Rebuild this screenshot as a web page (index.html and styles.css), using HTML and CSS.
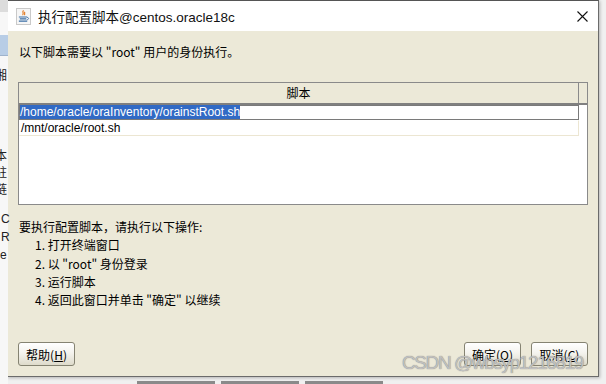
FILE: index.html
```html
<!DOCTYPE html>
<html lang="zh-CN">
<head>
    <meta charset="UTF-8">
    <title>执行配置脚本@centos.oracle18c</title>
    <link rel="stylesheet" href="styles.css">
</head>
<body>
    <div class="desk">
        <!-- janela de tras, so aparece nas bordas -->
        <div class="back-app">
            <div class="back-sel"></div>
            <div class="back-txt t1">湘</div>
            <div class="back-txt t2">本</div>
            <div class="back-txt t3">驻</div>
            <div class="back-txt t4">链</div>
            <div class="back-txt t5">C</div>
            <div class="back-txt t6">R</div>
            <div class="back-txt t7">e</div>
        </div>
        <div class="back-tabs">
            <span class="tab"></span>
            <span class="tab"></span>
            <span class="tab"></span>
        </div>

        <div class="window">
            <div class="titlebar">
                <span class="title-icon">
                    <svg width="14" height="15" viewBox="0 0 14 15">
                        <path d="M7 1 C5 3 8 4 6 6 M8.5 2.5 C7.5 4 9 4.5 8 6" stroke="#e0761c" stroke-width="1.2" fill="none"/>
                        <path d="M2 8 h9 M3 10 h7 M2 12.5 h9" stroke="#3a6ea5" stroke-width="1.2" fill="none"/>
                        <path d="M11 8.5 c2 0 2 2.5 -0.5 2.5" stroke="#3a6ea5" stroke-width="1" fill="none"/>
                    </svg>
                </span>
                <span class="title-text">执行配置脚本@centos.oracle18c</span>
                <span class="close-btn">
                    <svg width="11" height="11" viewBox="0 0 11 11">
                        <path d="M0.5 0.5 L10.5 10.5 M10.5 0.5 L0.5 10.5" stroke="#111" stroke-width="1.1"/>
                    </svg>
                </span>
            </div>

            <div class="content">
                <p class="intro">以下脚本需要以 "root" 用户的身份执行。</p>

                <div class="script-table">
                    <div class="table-head">
                        <div class="head-cell">脚本</div>
                        <div class="head-fill"></div>
                    </div>
                    <div class="table-body">
                        <div class="rows">
                            <div class="row selected"><span class="sel-text">/home/oracle/oraInventory/orainstRoot.sh</span></div>
                            <div class="row">/mnt/oracle/root.sh</div>
                        </div>
                    </div>
                </div>

                <div class="steps">
                    <div class="steps-title">要执行配置脚本，请执行以下操作:</div>
                    <div class="step">1. 打开终端窗口</div>
                    <div class="step">2. 以 "root" 身份登录</div>
                    <div class="step">3. 运行脚本</div>
                    <div class="step">4. 返回此窗口并单击 "确定" 以继续</div>
                </div>

                <div class="buttons">
                    <button class="btn">帮助(<u>H</u>)</button>
                    <div class="btn-group">
                        <button class="btn">确定(<u>O</u>)</button>
                        <button class="btn">取消(<u>C</u>)</button>
                    </div>
                </div>
            </div>
        </div>

        <div class="watermark">CSDN @wbsyp1216819</div>
    </div>
</body>
</html>
```

FILE: styles.css
```css
body {
    margin: 0;
    font-family: 'Liberation Sans', 'Noto Sans CJK SC', sans-serif;
    font-size: 12px;
    color: black;
    background-color: #f2f2f2;
}

.desk {
    width: 606px;
    height: 384px;
    position: relative;
    overflow: hidden;
    padding: 0 7px 7px 7px;
    box-sizing: border-box;
    background-color: #f0f0f0;
}

/* pedacos da janela de tras */
.back-app {
    position: absolute;
    left: 0;
    top: 0;
    width: 8px;
    height: 384px;
    background: linear-gradient(to bottom, #dcdcdc 0, #dcdcdc 12px, #f7f7f7 12px);
}

.back-sel {
    position: absolute;
    left: 0;
    top: 35px;
    width: 8px;
    height: 20px;
    background-color: #b8cde6;
    border-bottom: 1px solid #9fb3cc;
}

.back-txt {
    position: absolute;
    left: -5px;
    font-family: 'Noto Sans CJK SC', sans-serif;
    font-size: 12px;
    line-height: 14px;
    color: #222;
}

.t1 { top: 68px; }
.t2 { top: 148px; }
.t3 { top: 165px; }
.t4 { top: 182px; }
.t5 { top: 212px; left: 1px; font-family: 'Liberation Sans', sans-serif; }
.t6 { top: 230px; left: 1px; font-family: 'Liberation Sans', sans-serif; }
.t7 { top: 248px; left: 0; font-family: 'Liberation Sans', sans-serif; }

.back-tabs {
    position: absolute;
    left: 137px;
    top: 381px;
    display: flex;
    gap: 6px;
}

.tab {
    width: 78px;
    height: 3px;
    background-color: #8a8a8a;
}

.window {
    width: 592px;
    height: 377px;
    box-sizing: border-box;
    border: 1px solid #6b6b6b;
    border-top-color: #555;
    background-color: #ece9d8;
    display: flex;
    flex-direction: column;
    box-shadow: 1px 1px 3px rgba(0, 0, 0, 0.25);
}

.titlebar {
    height: 30px;
    background-color: white;
    display: flex;
    align-items: center;
    padding: 0 9px 0 8px;
}

.title-icon {
    width: 13px;
    height: 15px;
    border: 1px solid #c9c9c9;
    background-color: #f6f6f6;
    display: flex;
    align-items: center;
    justify-content: center;
    margin-right: 7px;
}

.title-text {
    font-family: 'Liberation Sans', 'Noto Sans CJK SC', sans-serif;
    font-size: 13.5px;
    color: #111;
    flex: 1;
}

.close-btn {
    display: flex;
    margin-right: 1px;
}

.content {
    flex: 1;
    display: flex;
    flex-direction: column;
    padding: 0 10px 10px 10px;
}

.intro {
    margin: 12px 0 0 1px;
    font-family: 'Noto Sans CJK SC', sans-serif;
    line-height: 18px;
}

.script-table {
    margin-top: 21px;
    height: 121px;
    border: 1px solid #8a8a8a;
    background-color: white;
    display: flex;
    flex-direction: column;
}

.table-head {
    display: flex;
    height: 20px;
    background-color: #ece9d8;
    border-bottom: 2px solid #808080;
}

.head-cell {
    flex: 1;
    text-align: center;
    line-height: 20px;
    font-family: 'Noto Sans CJK SC', sans-serif;
    border-right: 1px solid #8a8a8a;
}

.head-fill {
    width: 8px;
}

.table-body {
    padding-right: 8px;
}

.row {
    height: 16px;
    line-height: 15px;
    padding-left: 1px;
    box-sizing: border-box;
    border: 1px solid transparent;
    border-bottom-color: #ece6d2;
    border-right-color: #ece6d2;
}

.row.selected {
    height: 15px;
    border: 1px solid #7a7a7a;
    line-height: 13px;
    padding-left: 0;
}

.sel-text {
    background-color: #316ac5;
    color: white;
}

.steps {
    margin-top: 13px;
    font-family: 'Noto Sans CJK SC', sans-serif;
    line-height: 18.3px;
    padding-left: 1px;
}

.step {
    padding-left: 16px;
}

.buttons {
    margin-top: auto;
    display: flex;
    justify-content: space-between;
    align-items: flex-end;
}

.btn-group {
    display: flex;
    gap: 10px;
}

.btn {
    width: 57px;
    height: 24px;
    padding: 0;
    font-family: 'Noto Sans CJK SC', sans-serif;
    font-size: 12px;
    color: black;
    border: 1px solid #858372;
    border-radius: 3px;
    background: linear-gradient(to bottom, #ffffff 0%, #f4f3ee 45%, #dedbcb 100%);
}

.watermark {
    position: absolute;
    left: 402px;
    top: 352px;
    font-family: 'Liberation Sans', sans-serif;
    font-size: 19px;
    letter-spacing: -1.4px;
    color: rgba(205, 205, 205, 0.85);
    text-shadow: 0 0 1px #6a6a6a;
    white-space: nowrap;
}
```
